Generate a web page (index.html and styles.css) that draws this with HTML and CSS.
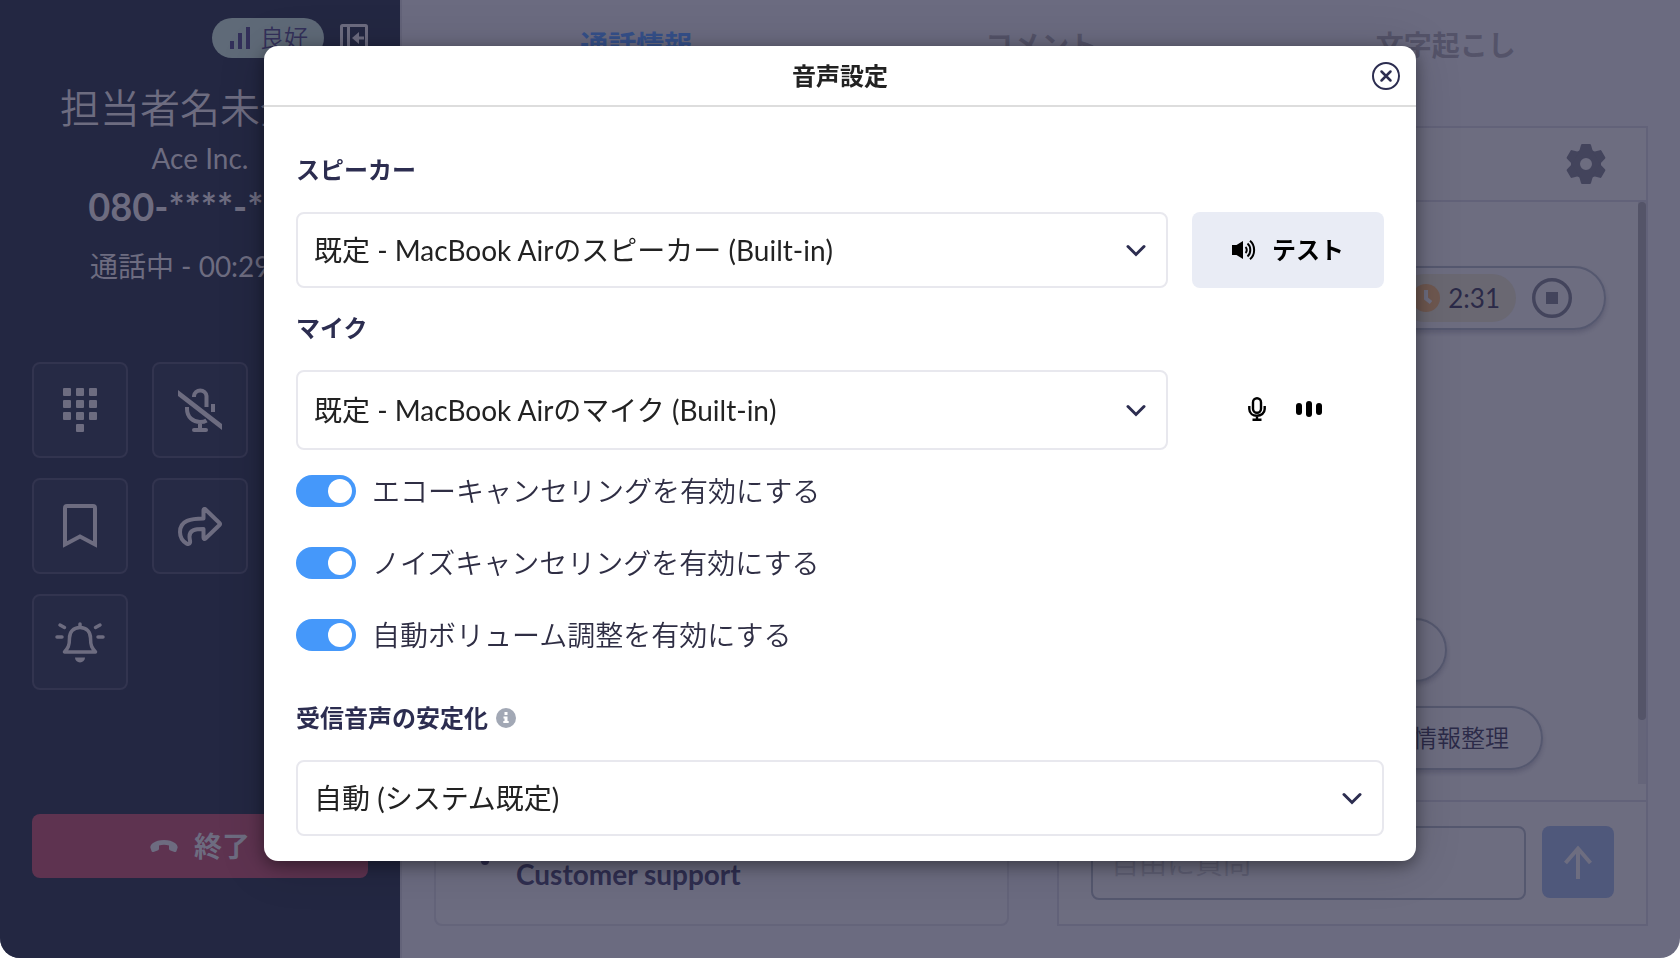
FILE: index.html
```html
<!DOCTYPE html>
<html lang="ja">

<head>
    <meta charset="UTF-8">
    <meta name="viewport" content="width=device-width, initial-scale=1.0">
    <title>音声設定</title>
    <link rel="stylesheet" href="styles.css">
</head>

<body>
    <div class="app">
        <aside class="side">
            <div class="status">
                <span class="quality">
                    <svg width="20" height="22" viewBox="0 0 20 22" fill="currentColor"><path d="M0 14h4v8H0zM8 6h4v16H8zM16 0h4v22h-4z"/></svg>
                    良好
                </span>
                <button class="collapse" type="button" aria-label="閉じる">
                    <svg width="28" height="28" viewBox="0 0 28 28" fill="none" stroke="currentColor" stroke-width="3">
                        <rect x="1.5" y="1.5" width="25" height="25" rx="1"/>
                        <path d="M8.5 2v24M17 14h7"/>
                        <path d="M12 14l7-6v12z" fill="currentColor" stroke="none"/>
                    </svg>
                </button>
            </div>
            <div class="caller">
                <h1>担当者名未登録</h1>
                <p class="company">Ace Inc.</p>
                <p class="phone">080-****-****</p>
                <p class="time">通話中 - 00:29:45</p>
            </div>
            <div class="actions">
                <button type="button" aria-label="キーパッド">
                    <svg width="34" height="44" viewBox="0 0 34 44" fill="currentColor">
                        <rect width="8" height="8" rx="1"/><rect x="13" width="8" height="8" rx="1"/><rect x="26" width="8" height="8" rx="1"/>
                        <rect y="12" width="8" height="8" rx="1"/><rect x="13" y="12" width="8" height="8" rx="1"/><rect x="26" y="12" width="8" height="8" rx="1"/>
                        <rect y="24" width="8" height="8" rx="1"/><rect x="13" y="24" width="8" height="8" rx="1"/><rect x="26" y="24" width="8" height="8" rx="1"/>
                        <rect x="13" y="36" width="8" height="8" rx="1"/>
                    </svg>
                </button>
                <button type="button" aria-label="ミュート">
                    <svg width="44" height="44" viewBox="0 0 44 44" fill="none" stroke="currentColor" stroke-width="4">
                        <path d="M16 9V8a6.3 6.3 0 0 1 12.5 0v11M35 16v8M9 19v2c0 8 6 13 13 13 3 0 5-.5 6.500-1.500M22 34v7"/>
                        <path d="M16 42h12" stroke-linecap="round"/>
                        <path d="M0 2l44 34v6L0 8z" fill="currentColor" stroke="none"/>
                    </svg>
                </button>
                <button type="button" aria-label="ブックマーク">
                    <svg width="34" height="44" viewBox="0 0 34 44" fill="none" stroke="currentColor" stroke-width="4">
                        <path d="M2 40.500V4a2 2 0 0 1 2-2h26a2 2 0 0 1 2 2v36.500L17 32.500z"/>
                    </svg>
                </button>
                <button type="button" aria-label="転送">
                    <svg width="44" height="39" viewBox="0 0 44 39" fill="none" stroke="currentColor" stroke-width="4" stroke-linejoin="round">
                        <path d="M25.500 3.500c0-1.500 1-2 2-1L41.500 16c.7.700.7 1.300 0 2L27.500 31.500c-1 1-2 .5-2-1V22c-9 0-14 1-14 7.500 0 3 1 4.500.5 6-.5 1.500-2 2-3.500 1C4.500 34 2 30 2 25 2 13.500 13 11.500 25.500 11.500z"/>
                    </svg>
                </button>
                <button type="button" aria-label="通知">
                    <svg width="50" height="41" viewBox="0 0 50 41" fill="none" stroke="currentColor" stroke-width="3.500" stroke-linecap="round" stroke-linejoin="round">
                        <path d="M25 5.500c-7 0-10.500 5-10.500 10.500C14.500 24 13 26 9.500 30h31c-3.500-4-5-6-5-14C35.500 10.500 32 5.500 25 5.500zM25 2v3"/>
                        <path d="M2 15h5M43 15h5M5 3l4.500 2.500M45 3l-4.500 2.500"/>
                        <path d="M20 35.500h10a5 5 0 0 1-10 0z" fill="currentColor" stroke="none"/>
                    </svg>
                </button>
            </div>
            <button class="end" type="button">
                <svg width="28" height="12" viewBox="0 0 28 12" fill="currentColor"><path d="M.5 8C-.5 6 3 0 14 0s14.500 6 13.500 8l-1 3c-.3.800-1 1.200-2 1l-4-1.500c-1-.3-1.500-1-1.500-2V5.500c-3-1-7-1-10 0v3c0 1-.5 1.700-1.500 2L3.500 12c-1 .2-1.700-.2-2-1z"/></svg>
                終了
            </button>
        </aside>

        <main class="main">
            <nav class="tabs">
                <a class="on" href="#info">通話情報</a>
                <a href="#comment">コメント</a>
                <a href="#text">文字起こし</a>
            </nav>
            <div class="cols">
                <section class="card">
                    <svg class="dot" width="10" height="10" viewBox="0 0 10 10"><circle cx="5" cy="5" r="4" fill="currentColor"/></svg>
                    <p>Customer support</p>
                </section>
                <section class="panel">
                    <header>
                        <button type="button" aria-label="設定">
                            <svg width="40" height="40" viewBox="-20 -20 40 40" fill="currentColor">
                                <circle r="10.500" fill="none" stroke="currentColor" stroke-width="9"/>
                                <path id="tooth" d="M-7-12l2-7q.2-1 1.200-1h7.600q1 0 1.200 1l2 7z"/>
                                <use href="#tooth" transform="rotate(60)"/>
                                <use href="#tooth" transform="rotate(120)"/>
                                <use href="#tooth" transform="rotate(180)"/>
                                <use href="#tooth" transform="rotate(240)"/>
                                <use href="#tooth" transform="rotate(300)"/>
                            </svg>
                        </button>
                    </header>
                    <div class="chat">
                        <div class="list">
                            <div class="pill rec">
                                <span class="clock">
                                    <svg width="28" height="28" viewBox="0 0 28 28"><circle cx="14" cy="14" r="14" fill="#6f5850"/><path d="M14 6v8.500l5 4" fill="none" stroke="#6d6d80" stroke-width="4"/></svg>
                                    2:31
                                </span>
                                <button type="button" aria-label="停止">
                                    <svg width="40" height="40" viewBox="0 0 40 40"><circle cx="20" cy="20" r="18.300" fill="none" stroke="currentColor" stroke-width="3.400"/><path d="M14 14h12v12H14z" fill="currentColor"/></svg>
                                </button>
                            </div>
                            <button class="pill short" type="button" aria-label="要約"></button>
                            <button class="pill long" type="button">情報整理</button>
                        </div>
                        <div class="scroll"><i></i></div>
                    </div>
                    <form class="ask">
                        <input type="text" placeholder="自由に質問" aria-label="自由に質問">
                        <button type="button" aria-label="送信">
                            <svg width="28" height="34" viewBox="0 0 28 34" fill="none" stroke="currentColor" stroke-width="4"><path d="M14 34V3M1.500 18L14 3.500 26.500 18"/></svg>
                        </button>
                    </form>
                </section>
            </div>
        </main>
    </div>

    <div class="overlay">
        <div class="modal" role="dialog" aria-labelledby="title">
            <header class="modal-head">
                <h2 id="title">音声設定</h2>
                <button class="close" type="button" aria-label="閉じる">
                    <svg width="28" height="28" viewBox="0 0 28 28" fill="none" stroke="currentColor"><circle cx="14" cy="14" r="13" stroke-width="2"/><path d="M9.500 9.500l9 9M18.500 9.500l-9 9" stroke-width="2.500" stroke-linecap="round"/></svg>
                </button>
            </header>
            <div class="modal-body">
                <label class="label" for="speaker">スピーカー</label>
                <div class="row">
                    <div class="select">
                        <select id="speaker"><option>既定 - MacBook Airのスピーカー (Built-in)</option></select>
                        <svg width="20" height="13" viewBox="0 0 20 13"><path d="M2 2.500l8 8 8-8"/></svg>
                    </div>
                    <button class="test" type="button">
                        <svg width="24" height="20" viewBox="0 0 24 20"><path d="M0 5h4.500L11 1v18l-6.500-4H0z"/><path d="M13.500 7c1.700 1.500 1.700 4.500 0 6M15.500 3.500c3.700 3 3.700 10 0 13M18 .800c5.500 4.500 5.500 14 0 18.400" fill="none" stroke="currentColor" stroke-width="2"/></svg>
                        テスト
                    </button>
                </div>
                <label class="label second" for="mic">マイク</label>
                <div class="row">
                    <div class="select tall">
                        <select id="mic"><option>既定 - MacBook Airのマイク (Built-in)</option></select>
                        <svg width="20" height="13" viewBox="0 0 20 13"><path d="M2 2.500l8 8 8-8"/></svg>
                    </div>
                    <div class="level">
                        <svg width="18" height="24" viewBox="0 0 18 24" fill="none" stroke="currentColor" stroke-width="2.400"><rect x="5" y="1.200" width="8" height="14.500" rx="4"/><path d="M1.300 9v3c0 9 15.400 9 15.400 0V9M9 19v4M4.500 22.800h9"/></svg>
                        <svg width="26" height="16" viewBox="0 0 26 16"><rect y="2" width="6" height="12" rx="3"/><rect x="10" width="6" height="16" rx="3"/><rect x="20" y="2" width="6" height="12" rx="3"/></svg>
                    </div>
                </div>
                <div class="switches">
                    <label><input type="checkbox" checked>エコーキャンセリングを有効にする</label>
                    <label><input type="checkbox" checked>ノイズキャンセリングを有効にする</label>
                    <label><input type="checkbox" checked>自動ボリューム調整を有効にする</label>
                </div>
                <label class="label" for="stable">受信音声の安定化
                    <svg width="20" height="20" viewBox="0 0 20 20"><circle cx="10" cy="10" r="10" fill="#a2a8b5"/><path d="M8.500 4h3v3h-3zM7.500 8.500h4V13h1.200v2H7.300v-2h1.200v-2.500h-1z" fill="#fff"/></svg>
                </label>
                <div class="select">
                    <select id="stable"><option>自動 (システム既定)</option></select>
                    <svg width="20" height="13" viewBox="0 0 20 13"><path d="M2 2.500l8 8 8-8"/></svg>
                </div>
            </div>
        </div>
    </div>
</body>

</html>
```
FILE: styles.css
```css
* {
    margin: 0;
    padding: 0;
    box-sizing: border-box;
}

body {
    font-family: Lato, "Noto Sans CJK JP", sans-serif;
    font-size: 28px;
    line-height: 40px;
    color: #222;
    background: #fff;
}

button, input, select {
    font: inherit;
    color: inherit;
    border: none;
    background: none;
}

svg {
    display: block;
    flex: none;
}

.app {
    display: flex;
    min-height: 100vh;
    border-radius: 0 0 20px 20px;
    overflow: hidden;
    background: #6b6b80;
}

/* 左側 */
.side {
    display: flex;
    flex-direction: column;
    flex: none;
    width: 400px;
    padding: 18px 32px 80px;
    background: #232742;
    color: #6d6c80;
}

.status {
    display: flex;
    justify-content: flex-end;
    align-items: center;
    gap: 16px;
}

.quality {
    display: flex;
    align-items: center;
    gap: 10px;
    height: 40px;
    padding: 0 16px 0 18px;
    border-radius: 20px;
    font-size: 24px;
    font-weight: 350;
    background: #5f6a78;
    color: #33305a;
}

.caller {
    margin-top: 20px;
    text-align: center;
    white-space: nowrap;
}

.caller h1 {
    font-size: 40px;
    font-weight: 350;
    line-height: 60px;
}

.caller .phone {
    font-size: 38px;
    font-weight: bold;
    line-height: 56px;
}

.caller .time {
    margin-top: 12px;
}

.actions {
    display: grid;
    grid-template-columns: 96px 96px;
    gap: 20px 24px;
    margin-top: 76px;
}

.actions button {
    display: flex;
    justify-content: center;
    align-items: center;
    height: 96px;
    border: 2px solid #32344f;
    border-radius: 8px;
    background: #262a45;
}

.end {
    display: flex;
    justify-content: center;
    align-items: center;
    gap: 16px;
    height: 64px;
    margin-top: auto;
    border-radius: 8px;
    font-weight: bold;
    background: #5e3350;
}

/* 右側 */
.main {
    display: flex;
    flex-direction: column;
    flex: 1;
    padding: 0 32px 32px;
    border-left: 2px solid #636379;
}

.tabs {
    display: flex;
    height: 90px;
    margin-bottom: 36px;
}

.tabs a {
    flex: 1;
    line-height: 90px;
    text-align: center;
    text-decoration: none;
    font-weight: bold;
    color: #545369;
}

.tabs .on {
    color: #35508a;
}

.cols {
    display: grid;
    grid-template-columns: 575fr 591fr;
    gap: 48px;
    flex: 1;
}

.card {
    display: flex;
    align-items: flex-end;
    gap: 26px;
    padding: 0 44px 30px;
    border: 2px solid #64647a;
    border-radius: 8px;
    background: #6c6c80;
    font-weight: bold;
    color: #2f2e50;
}

.card .dot {
    margin-bottom: 28px;
}

.panel {
    display: flex;
    flex-direction: column;
    border: 2px solid #626279;
    background: #6d6d80;
    color: #43445c;
}

.panel header {
    display: flex;
    justify-content: flex-end;
    align-items: center;
    height: 74px;
    padding: 0 40px;
    border-bottom: 2px solid #626279;
}

.chat {
    display: flex;
    flex: 1;
}

.list {
    display: flex;
    flex-direction: column;
    align-items: flex-start;
    flex: 1;
    padding: 64px 32px 30px;
}

.pill {
    height: 64px;
    padding: 0 32px;
    border: 2px solid #55586f;
    border-radius: 32px;
    box-shadow: 0 3px 4px rgba(30, 30, 60, 0.2);
    font-size: 24px;
    font-weight: 350;
    text-align: right;
    color: #2b2a48;
}

.rec {
    display: flex;
    justify-content: flex-end;
    align-items: center;
    align-self: stretch;
    gap: 16px;
}

.rec button {
    color: #43445c;
}

.clock {
    display: flex;
    align-items: center;
    gap: 8px;
    height: 48px;
    padding: 0 16px 0 12px;
    border-radius: 24px;
    font-size: 26px;
    font-weight: 400;
    background: #6a6872;
}

.short {
    width: 356px;
    margin-top: auto;
}

.long {
    width: 452px;
    margin-top: 24px;
}

.scroll {
    width: 8px;
    margin-bottom: 16px;
    background: #65657a;
}

.scroll i {
    display: block;
    height: 89%;
    border-radius: 4px;
    background: #545468;
}

.ask {
    display: flex;
    gap: 16px;
    padding: 24px 32px;
    border-top: 2px solid #626279;
}

.ask input {
    flex: 1;
    min-width: 0;
    height: 74px;
    padding: 0 18px;
    border: 2px solid #55586f;
    border-radius: 8px;
    font-weight: 350;
}

.ask input::placeholder {
    color: #5e5e73;
}

.ask button {
    display: flex;
    justify-content: center;
    align-items: center;
    width: 72px;
    height: 72px;
    border-radius: 8px;
    background: #4f587b;
    color: #6d6d80;
}

/* モーダル */
.overlay {
    position: fixed;
    inset: 0;
    display: flex;
    justify-content: center;
    align-items: flex-start;
    padding: 46px 32px;
}

.modal {
    width: 100%;
    max-width: 1152px;
    border-radius: 14px;
    background: #fff;
    box-shadow: 0 4px 16px rgba(0, 0, 0, 0.4), 0 4px 48px rgba(0, 0, 0, 0.16);
}

.modal-head {
    display: grid;
    grid-template-columns: 1fr auto 1fr;
    align-items: center;
    height: 61px;
    padding: 0 16px;
    border-bottom: 2px solid #ddd;
}

.modal-head h2 {
    grid-column: 2;
    font-size: 24px;
}

.close {
    justify-self: end;
    color: #2c2d50;
}

.modal-body {
    padding: 45px 32px 25px;
}

.label {
    display: flex;
    align-items: center;
    gap: 8px;
    margin-bottom: 24px;
    font-size: 24px;
    font-weight: bold;
    line-height: 36px;
    color: #2c2d50;
}

.second {
    margin-top: 22px;
}

.row {
    display: flex;
    gap: 24px;
}

.select {
    position: relative;
    flex: 1;
}

.select select {
    display: block;
    width: 100%;
    height: 76px;
    padding: 0 56px 0 16px;
    border: 2px solid #e8e8ee;
    border-radius: 8px;
    appearance: none;
}

.tall select {
    height: 80px;
}

/* 矢印 */
.select svg {
    position: absolute;
    top: calc(50% - 6px);
    right: 22px;
    fill: none;
    stroke: #2c2d50;
    stroke-width: 3;
    stroke-linecap: round;
    pointer-events: none;
}

.test {
    display: flex;
    justify-content: center;
    align-items: center;
    gap: 16px;
    width: 192px;
    border-radius: 8px;
    font-size: 24px;
    font-weight: bold;
    color: #000;
    background: #e9ecf5;
}

.level {
    display: flex;
    justify-content: center;
    align-items: center;
    gap: 30px;
    width: 192px;
    padding: 0 6px 2px 0;
    color: #000;
}

.switches {
    display: flex;
    flex-direction: column;
    gap: 32px;
    margin: 21px 0 45px;
}

.switches label {
    display: flex;
    align-items: center;
    gap: 16px;
    font-weight: 350;
    color: #2f2e44;
}

.switches input {
    appearance: none;
    width: 60px;
    height: 32px;
    border-radius: 16px;
    background: #ccc;
}

.switches input::before {
    content: "";
    display: block;
    width: 24px;
    height: 24px;
    margin: 4px;
    border-radius: 50%;
    background: #fff;
}

.switches input:checked {
    background: #4598fa;
}

.switches input:checked::before {
    margin-left: 32px;
}
```
